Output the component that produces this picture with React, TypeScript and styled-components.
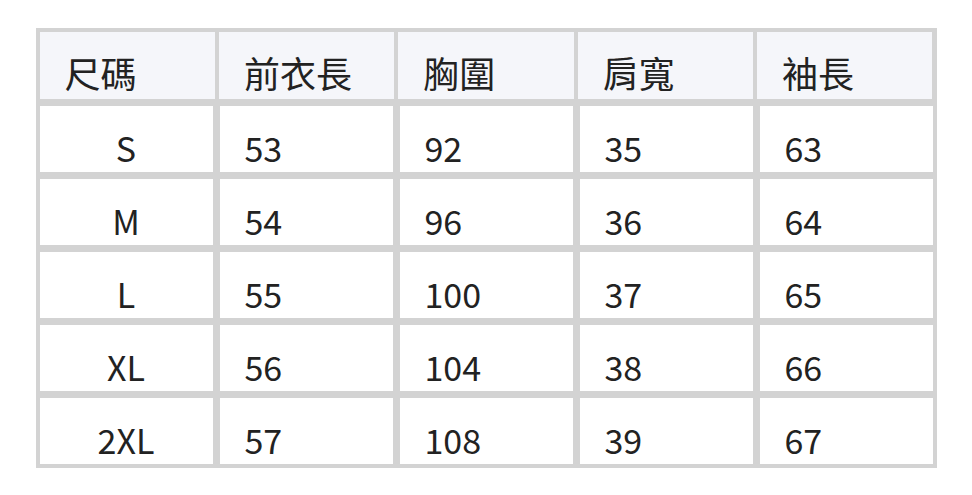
import styled, { createGlobalStyle } from "styled-components"

const sizes = [
  { size: "S", length: 53, chest: 92, shoulder: 35, sleeve: 63 },
  { size: "M", length: 54, chest: 96, shoulder: 36, sleeve: 64 },
  { size: "L", length: 55, chest: 100, shoulder: 37, sleeve: 65 },
  { size: "XL", length: 56, chest: 104, shoulder: 38, sleeve: 66 },
  { size: "2XL", length: 57, chest: 108, shoulder: 39, sleeve: 67 },
]

const headers = ["尺碼", "前衣長", "胸圍", "肩寬", "袖長"]

const App = () => {
  return (
    <>
      <GlobalStyle />
      <Page>
        <Table>
          <HeadRow>
            {headers.map(h => (
              <HeadCell key={h}>{h}</HeadCell>
            ))}
          </HeadRow>
          <Body>
            {sizes.map(row => (
              <Row key={row.size}>
                <Cell $center>{row.size}</Cell>
                <Cell>{row.length}</Cell>
                <Cell>{row.chest}</Cell>
                <Cell>{row.shoulder}</Cell>
                <Cell>{row.sleeve}</Cell>
              </Row>
            ))}
          </Body>
        </Table>
      </Page>
    </>
  )
}

export default App

const GlobalStyle = createGlobalStyle`
  body {
    margin: 0;
    background: #fff;
    font-family: "Noto Sans CJK TC", "Noto Sans", sans-serif;
    color: #222;
  }
`

const Page = styled.div`
  padding-top: 28px;
`

const Table = styled.div`
  width: 893px;
  margin: 0 auto;
  padding: 4px;
  background-color: #d3d3d3;
`

const HeadRow = styled.div`
  display: grid;
  grid-template-columns: repeat(5, 1fr);
  gap: 4px;
  height: 67px;
  margin-bottom: 7px;
`

const HeadCell = styled.div`
  display: flex;
  align-items: flex-end;
  padding-left: 25px;
  padding-bottom: 1px;
  background-color: #f5f6fa;
  font-size: 36px;
`

const Body = styled.div`
  display: flex;
  flex-direction: column;
  gap: 7px;
`

const Row = styled.div`
  display: grid;
  grid-template-columns: repeat(5, 1fr);
  gap: 7px;
  height: 66px;
`

const Cell = styled.div<{ $center?: boolean }>`
  display: flex;
  align-items: flex-end;
  justify-content: ${p => (p.$center ? "center" : "flex-start")};
  padding-left: ${p => (p.$center ? "0" : "25px")};
  background-color: #fff;
  font-size: 34px;
`
